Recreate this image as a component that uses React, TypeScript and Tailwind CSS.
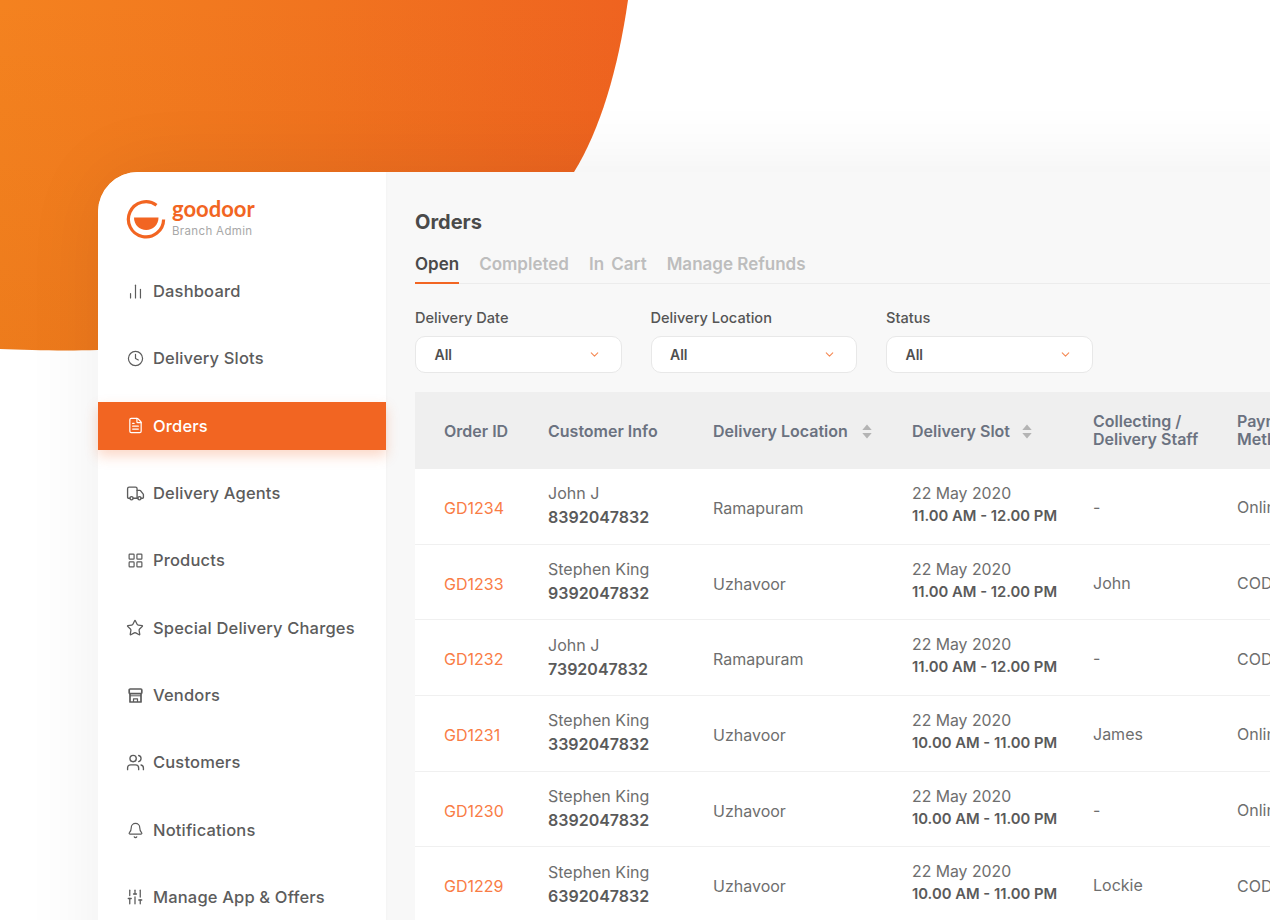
import { Bell, ChartNoAxesColumn, ChevronDown, Clock, FileText, LayoutGrid, SlidersVertical, Star, Truck, Users } from 'lucide-react';

function StoreIcon({ size = 17, strokeWidth = 1.6 }: { size?: number; strokeWidth?: number }) {
  return (
    <svg width={size} height={size} viewBox="0 0 17 17" fill="none" stroke="currentColor" strokeWidth={strokeWidth} strokeLinejoin="round">
      <rect x="2.2" y="2" width="12.6" height="4.6" rx="1" />
      <path d="M3 6.6V15H14V6.6" />
      <path d="M3 8.8H14" strokeWidth="1" />
      <path d="M6.5 15V11.8H10.5V15" strokeWidth="1.2" />
    </svg>
  );
}

const navItems = [
  { label: 'Dashboard', icon: ChartNoAxesColumn, size: 17 },
  { label: 'Delivery Slots', icon: Clock, size: 17 },
  { label: 'Orders', icon: FileText, size: 17, active: true },
  { label: 'Delivery Agents', icon: Truck, size: 19 },
  { label: 'Products', icon: LayoutGrid, size: 17 },
  { label: 'Special Delivery Charges', icon: Star, size: 18 },
  { label: 'Vendors', icon: StoreIcon, size: 17 },
  { label: 'Customers', icon: Users, size: 19 },
  { label: 'Notifications', icon: Bell, size: 17 },
  { label: 'Manage App & Offers', icon: SlidersVertical, size: 18 },
];

const orders = [
  { id: 'GD1234', name: 'John J', phone: '8392047832', place: 'Ramapuram', slot: '11.00 AM - 12.00 PM', staff: '-', pay: 'Online' },
  { id: 'GD1233', name: 'Stephen King', phone: '9392047832', place: 'Uzhavoor', slot: '11.00 AM - 12.00 PM', staff: 'John', pay: 'COD' },
  { id: 'GD1232', name: 'John J', phone: '7392047832', place: 'Ramapuram', slot: '11.00 AM - 12.00 PM', staff: '-', pay: 'COD' },
  { id: 'GD1231', name: 'Stephen King', phone: '3392047832', place: 'Uzhavoor', slot: '10.00 AM - 11.00 PM', staff: 'James', pay: 'Online' },
  { id: 'GD1230', name: 'Stephen King', phone: '8392047832', place: 'Uzhavoor', slot: '10.00 AM - 11.00 PM', staff: '-', pay: 'Online' },
  { id: 'GD1229', name: 'Stephen King', phone: '6392047832', place: 'Uzhavoor', slot: '10.00 AM - 11.00 PM', staff: 'Lockie', pay: 'COD' },
];

const filters = ['Delivery Date', 'Delivery Location', 'Status'];
const rowGrid = 'grid grid-cols-[104px_165px_199px_181px_144px_200px] w-[1022px]';

function SortIcon() {
  return (
    <svg width="10" height="15" viewBox="0 0 10 15" className="shrink-0" fill="#b4b4b4">
      <path d="M5 0.5 9.7 6H0.3Z" />
      <path d="M5 14.5 9.7 9H0.3Z" />
    </svg>
  );
}

function Logo() {
  return (
    <svg width="40" height="40" viewBox="0 0 40 40" className="shrink-0">
      <path d="M30.5 6.2A17.6 17.6 0 1 0 37.6 20.5" fill="none" stroke="#f26522" strokeWidth="3.2" />
      <path d="M8 18.5H32.5C32.5 26 27 31 20.2 31S8 26 8 18.5Z" fill="#f26522" />
    </svg>
  );
}

function App() {
  return (
    <div className="relative h-[920px] w-[1270px] overflow-hidden bg-white font-['Inter',sans-serif]">
      {/* blob behind the card */}
      <svg className="absolute left-0 top-0" width="640" height="360" viewBox="0 0 640 360">
        <defs>
          <linearGradient id="blob" x1="0" y1="0" x2="628" y2="0" gradientUnits="userSpaceOnUse">
            <stop offset="0" stopColor="#f4821f" />
            <stop offset="0.5" stopColor="#f1741f" />
            <stop offset="1" stopColor="#ef6320" />
          </linearGradient>
          <linearGradient id="blobShade" x1="0" y1="0" x2="0" y2="350" gradientUnits="userSpaceOnUse">
            <stop offset="0" stopColor="#b04000" stopOpacity="0" />
            <stop offset="1" stopColor="#b04000" stopOpacity="0.1" />
          </linearGradient>
        </defs>
        <path d="M0 0H628C618 70 600 130 574 172L98 350C60 351 30 350 0 349Z" fill="url(#blob)" />
        <path d="M0 0H628C618 70 600 130 574 172L98 350C60 351 30 350 0 349Z" fill="url(#blobShade)" />
      </svg>

      <div className="relative ml-[98px] mt-[172px] flex h-[900px] w-[1300px] rounded-tl-[40px] bg-[#f8f8f8] shadow-[0_0_80px_rgba(0,0,0,0.07)]">
        <aside className="w-[288px] shrink-0 rounded-tl-[40px] bg-white shadow-[1px_0_3px_rgba(0,0,0,0.02)]">
          <div className="flex items-center gap-[6px] pl-[28px] pt-[27px]">
            <Logo />
            <div className="-mt-[3px]">
              <div className="font-['Lato',sans-serif] text-[22px] font-bold leading-[24px] text-[#f26522]">goodoor</div>
              <div className="mt-[3px] text-[11.5px] font-normal leading-[14px] tracking-[0.03em] text-[#a8a8a8]">Branch Admin</div>
            </div>
          </div>
          <nav className="mt-[28.3px] flex flex-col gap-[19.35px]">
            {navItems.map((item) => {
              const Icon = item.icon;
              return (
                <div
                  key={item.label}
                  className={
                    item.active
                      ? 'flex h-[48px] items-center bg-[#f26522] text-white shadow-[0_6px_12px_rgba(242,101,34,0.25)]'
                      : 'flex h-[48px] items-center text-[#5c5c5c]'
                  }
                >
                  <div className="flex w-[55px] justify-center pl-[19px]">
                    <Icon size={item.size} strokeWidth={1.7} />
                  </div>
                  <span className="text-[16.5px] font-medium tracking-[0.01em]">{item.label}</span>
                </div>
              );
            })}
          </nav>
        </aside>

        <main className="min-w-0 flex-1 pl-[29px] pt-[38px]">
          <h1 className="text-[20px] font-bold leading-[24px] text-[#4a4a4a]">Orders</h1>
          <div className="mt-[18px] flex gap-[20px] border-b border-[#ececec] text-[17px] font-semibold leading-[24px]">
            <div className="-mb-px border-b-2 border-[#f26522] pb-[6px] text-[#4a4a4a]">Open</div>
            <div className="text-[#bdbdbd]">Completed</div>
            <div className="text-[#bdbdbd] [word-spacing:3px]">In Cart</div>
            <div className="text-[#bdbdbd]">Manage Refunds</div>
          </div>

          <div className="mt-[25px] flex gap-[29px]">
            {filters.map((f) => (
              <div key={f} className="w-[206.5px]">
                <div className="text-[14.6px] font-medium leading-[18px] text-[#555]">{f}</div>
                <div className="mt-[9px] flex h-[37px] items-center justify-between rounded-[10px] border border-[#e8e8e8] bg-white pl-[18.5px] pr-[20px] text-[14px] font-semibold text-[#4f4f4f]">
                  All
                  <ChevronDown size={13} strokeWidth={2} className="text-[#f58a55]" />
                </div>
              </div>
            ))}
          </div>

          <div className="mt-[19px] w-[1022px]">
            <div className={`${rowGrid} h-[77px] items-center bg-[#efefef] pl-[29px] pt-[1px] text-[16px] font-semibold leading-[18px] text-[#6b7280]`}>
              <div>Order ID</div>
              <div>Customer Info</div>
              <div className="flex items-center gap-[14px]">Delivery Location <SortIcon /></div>
              <div className="flex items-center gap-[12px]">Delivery Slot <SortIcon /></div>
              <div className="-mt-[2px]">Collecting /<br />Delivery Staff</div>
              <div className="-mt-[2px]">Payment<br />Method</div>
            </div>
            {orders.map((o) => (
              <div key={o.id} className={`${rowGrid} h-[75.7px] items-center border-b border-[#f0f0f0] bg-white pl-[29px] text-[16px] leading-[22px] text-[#6e6e6e]`}>
                <div className="pt-[3px] text-[#f97c45]">{o.id}</div>
                <div className="pb-[2px]">
                  <div>{o.name}</div>
                  <div className="mt-[2px] font-semibold text-[#5a5a5a]">{o.phone}</div>
                </div>
                <div className="pt-[3px]">{o.place}</div>
                <div className="pb-[3px]">
                  <div className="text-[15.8px]">22 May 2020</div>
                  <div className="text-[14.8px] font-semibold text-[#5a5a5a]">{o.slot}</div>
                </div>
                <div className="pt-[1px]">{o.staff}</div>
                <div className="pt-[2px]">{o.pay}</div>
              </div>
            ))}
          </div>
        </main>
      </div>
    </div>
  );
}

export default App;
